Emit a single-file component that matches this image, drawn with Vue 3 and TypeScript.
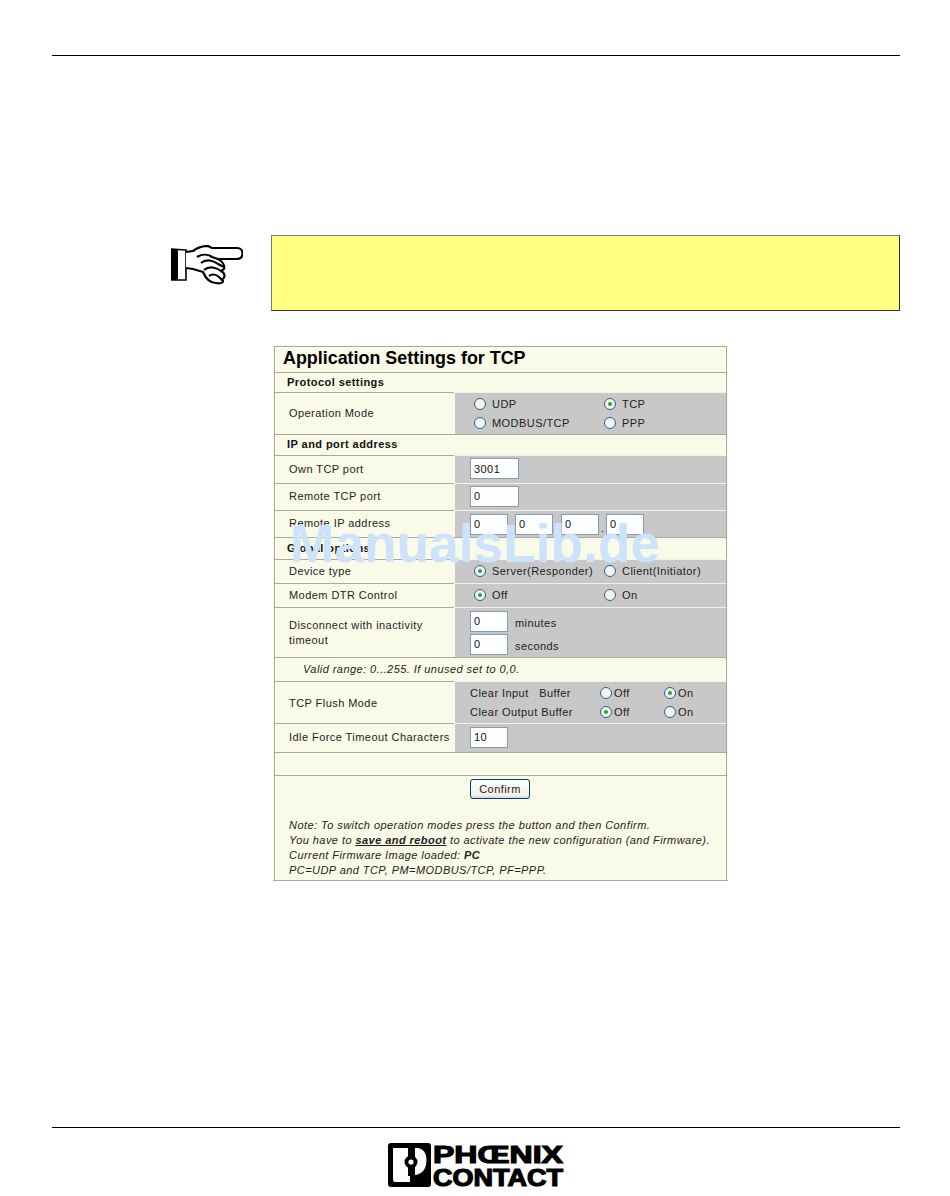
<script setup lang="ts">
interface RadioOpt { label: string; checked?: boolean }
const modes: RadioOpt[] = [
  { label: 'UDP' },
  { label: 'TCP', checked: true },
  { label: 'MODBUS/TCP' },
  { label: 'PPP' },
]
const ipParts: string[] = ['0', '0', '0', '0']
</script>

<template>
  <div class="page">
    <div class="rule top-rule"></div>

    <section class="note-row">
      <svg class="hand" viewBox="0 0 72 40" width="72" height="40" aria-hidden="true">
        <path d="M15 5 L0 4 V35 H15 Z" fill="#fff" stroke="#000" stroke-width="1.6" />
        <rect x="0" y="4" width="7" height="31" fill="#000" />
        <path
          d="M15 7 L22 6 C26 3 31 1 37 1 L41 3 H66 C70 3 71.500 6 71.500 8.500 C71.500 12 69 14 65 14 H47 C51 16 54 20 53 24 L50 26 C54 28 55 32 51 35 C54 37 50 39 45 38 C39 38 35 34 32 27 L22 24 L15 23"
          fill="#fff" stroke="#000" stroke-width="2.200" stroke-linejoin="round"
        />
        <path
          d="M26 12 C31 9 37 9 41 12 L47 14 M30 18 C35 14 42 15 47 19 L53 22 M33 25 C38 21 45 22 50 26 M38 31 C42 28 47 30 51 35"
          fill="none" stroke="#000" stroke-width="2.200"
        />
      </svg>
      <div class="note-box"></div>
    </section>

    <main class="panel">
      <h1 class="title cell wide">Application Settings for TCP</h1>

      <div class="section cell wide">Protocol settings</div>

      <div class="label cell">Operation Mode</div>
      <div class="value cell radio-grid full">
        <label v-for="m in modes" :key="m.label" class="radio-item">
          <span class="radio" :class="{ on: m.checked }"></span>{{ m.label }}
        </label>
      </div>

      <div class="section cell wide">IP and port address</div>

      <div class="label cell">Own TCP port</div>
      <div class="value cell"><span class="input long">3001</span></div>

      <div class="label cell">Remote TCP port</div>
      <div class="value cell"><span class="input long">0</span></div>

      <div class="label cell">Remote IP address</div>
      <div class="value cell ip-row full">
        <template v-for="(p, i) in ipParts" :key="i">
          <span class="input">{{ p }}</span><span v-if="i < 3" class="dot">.</span>
        </template>
      </div>

      <div class="section cell wide">Global options</div>

      <div class="label cell">Device type</div>
      <div class="value cell radio-grid">
        <label class="radio-item"><span class="radio on"></span>Server(Responder)</label>
        <label class="radio-item"><span class="radio"></span>Client(Initiator)</label>
      </div>

      <div class="label cell">Modem DTR Control</div>
      <div class="value cell radio-grid">
        <label class="radio-item"><span class="radio on"></span>Off</label>
        <label class="radio-item"><span class="radio"></span>On</label>
      </div>

      <div class="label cell multi full">Disconnect with inactivity<br />timeout</div>
      <div class="value cell stack full">
        <div class="unit"><span class="input">0</span><span>minutes</span></div>
        <div class="unit"><span class="input">0</span><span>seconds</span></div>
      </div>

      <div class="hint cell wide">Valid range: 0...255. If unused set to 0,0.</div>

      <div class="label cell full">TCP Flush Mode</div>
      <div class="value cell flush-grid full">
        <span>Clear Input&nbsp;&nbsp;&nbsp;Buffer</span>
        <label class="radio-item tight"><span class="radio"></span>Off</label>
        <label class="radio-item tight"><span class="radio on"></span>On</label>
        <span>Clear Output Buffer</span>
        <label class="radio-item tight"><span class="radio on"></span>Off</label>
        <label class="radio-item tight"><span class="radio"></span>On</label>
      </div>

      <div class="label cell">Idle Force Timeout Characters</div>
      <div class="value cell"><span class="input">10</span></div>

      <div class="cell wide"></div>

      <div class="cell wide footer-cell">
        <button class="confirm" type="button">Confirm</button>
        <p class="notes">
          Note: To switch operation modes press the button and then Confirm.<br />
          You have to <strong class="under">save and reboot</strong> to activate the new configuration (and Firmware).<br />
          Current Firmware Image loaded: <strong>PC</strong><br />
          PC=UDP and TCP, PM=MODBUS/TCP, PF=PPP.
        </p>
      </div>
    </main>

    <div class="watermark">ManualsLib.de</div>

    <footer class="foot">
      <div class="rule"></div>
      <div class="logo">
        <svg class="logo-mark" viewBox="0 0 43 44" width="43" height="44" aria-hidden="true">
          <rect x="0" y="0" width="43" height="44" rx="3" fill="#000" />
          <path d="M5 5 H20 V33 L22 33 V39 H7 Q5 39 5 37 Z" fill="#fff" />
          <path d="M27 5 H29 C35 5 38.500 10 38.500 17 C38.500 25 35 31 27 32 Z" fill="#fff" />
          <circle cx="23" cy="19" r="6.500" fill="#000" />
          <circle cx="23" cy="19" r="2.600" fill="#fff" />
        </svg>
        <svg class="logo-word" viewBox="0 0 132 44" width="132" height="44" role="img">
          <text x="0" y="20" textLength="130" lengthAdjust="spacingAndGlyphs" class="word">PHŒNIX</text>
          <text x="0" y="43" textLength="130" lengthAdjust="spacingAndGlyphs" class="word">CONTACT</text>
        </svg>
      </div>
    </footer>
  </div>
</template>

<style scoped>
.page {
  position: relative;
  width: 950px;
  height: 1196px;
  overflow: hidden;
  background: #fff;
  font-family: "Liberation Sans", Arial, sans-serif;
  font-size: 11px;
  color: #222;
  letter-spacing: 0.44px;
}
.rule {
  height: 1px;
  background: #000;
  margin: 0 50px 0 52px;
}
.top-rule {
  margin-top: 55px;
}
.note-row {
  display: flex;
  align-items: flex-start;
  margin: 179px 50px 0 171px;
  height: 76px;
}
.hand {
  margin-top: 10px;
  margin-right: 28px;
  flex: none;
}
.note-box {
  flex: 1;
  height: 76px;
  box-sizing: border-box;
  background: #ffff80;
  border: 1px solid #333;
  border-left-color: #777;
  border-top-color: #777;
}
.panel {
  box-sizing: border-box;
  width: 455px;
  height: 536px;
  margin: 34px 0 0 273px;
  padding: 1px 1px 0 1px;
  background: #fafae9;
  border-bottom: 1px solid #a8a89c;
  display: grid;
  grid-template-columns: 180px 1fr;
  grid-template-rows: 26px 20px 42px 21px 28px 27px 27px 22px 24px 24px 50px 24px 42px 29px 23px 105px;
}
.cell {
  box-sizing: border-box;
  border-top: 1px solid #a9a99f;
  border-left: 1px solid #a9a99f;
  border-right: 1px solid #a9a99f;
  min-width: 0;
  margin: 0;
  padding-bottom: 2px;
}
.cell.full {
  padding-bottom: 0;
}
.wide {
  grid-column: 1 / -1;
}
.title {
  font-size: 17.900px;
  font-weight: bold;
  color: #000;
  letter-spacing: 0;
  line-height: 23px;
  padding-left: 8px;
}
.section {
  display: flex;
  align-items: center;
  padding-left: 12px;
  font-weight: bold;
  color: #111;
}
.label {
  display: flex;
  align-items: center;
  padding-left: 14px;
  border-right: 0;
  white-space: nowrap;
}
.label.multi {
  line-height: 15px;
}
.value {
  background: #c8c8c8;
  border-left: 1px solid #fafae9;
  border-top-color: #f2f2e6;
  display: flex;
  align-items: center;
  padding-left: 15px;
}
.radio-grid {
  display: grid;
  grid-template-columns: 130px 1fr;
  align-content: center;
  row-gap: 5px;
  padding-left: 19px;
}
.radio-item {
  display: flex;
  align-items: center;
  gap: 6px;
  height: 14px;
  white-space: nowrap;
}
.radio-item.tight {
  gap: 2px;
}
.radio {
  position: relative;
  flex: none;
  box-sizing: border-box;
  width: 12px;
  height: 12px;
  border: 1px solid #2c5f8f;
  border-radius: 50%;
  background: #f4f4f0;
}
.radio.on::after {
  content: "";
  position: absolute;
  left: 3px;
  top: 3px;
  width: 4px;
  height: 4px;
  border-radius: 50%;
  background: #25a82c;
}
.input {
  display: inline-flex;
  align-items: center;
  box-sizing: border-box;
  width: 38px;
  height: 21px;
  padding-left: 3px;
  background: #fff;
  border: 1px solid #7f9db9;
  color: #111;
}
.input.long {
  width: 49px;
}
.ip-row .dot {
  width: 7px;
  align-self: flex-end;
  padding-bottom: 3px;
  text-align: center;
  letter-spacing: 0;
}
.ip-row .input:nth-of-type(5) {
  margin-left: 1px;
}
.stack {
  flex-direction: column;
  align-items: flex-start;
  justify-content: center;
  gap: 2px;
}
.unit {
  display: flex;
  align-items: flex-end;
  gap: 7px;
}
.unit span:last-child {
  padding-bottom: 3px;
}
.flush-grid {
  display: grid;
  grid-template-columns: 130px 64px 1fr;
  align-content: center;
  row-gap: 5px;
}
.hint {
  display: flex;
  align-items: center;
  padding-left: 28px;
  font-style: italic;
}
.footer-cell {
  display: flex;
  flex-direction: column;
  border-bottom: 0;
}
.confirm {
  align-self: flex-start;
  box-sizing: border-box;
  width: 60px;
  height: 20px;
  margin: 3px 0 0 195px;
  padding: 0;
  border: 1px solid #003c74;
  border-radius: 3px;
  background: linear-gradient(#fff, #f0efe8 85%, #dcd8ce);
  font: inherit;
  letter-spacing: inherit;
  color: #222;
}
.notes {
  margin: 19px 0 0 14px;
  font-style: italic;
  line-height: 15px;
  white-space: nowrap;
}
.under {
  text-decoration: underline;
}
.watermark {
  position: absolute;
  left: 290px;
  top: 514px;
  font-size: 53.300px;
  line-height: 60px;
  font-weight: bold;
  letter-spacing: 0;
  color: #cde2fb;
  white-space: nowrap;
  pointer-events: none;
}
.foot {
  margin-top: 246px;
}
.logo {
  display: flex;
  gap: 2px;
  margin: 15px 0 0 388px;
}
.logo-word {
  overflow: visible;
}
.word {
  font-family: "Liberation Sans", Arial, sans-serif;
  font-size: 24px;
  font-weight: bold;
  letter-spacing: 0;
  fill: #000;
  stroke: #000;
  stroke-width: 1.200px;
}
</style>
